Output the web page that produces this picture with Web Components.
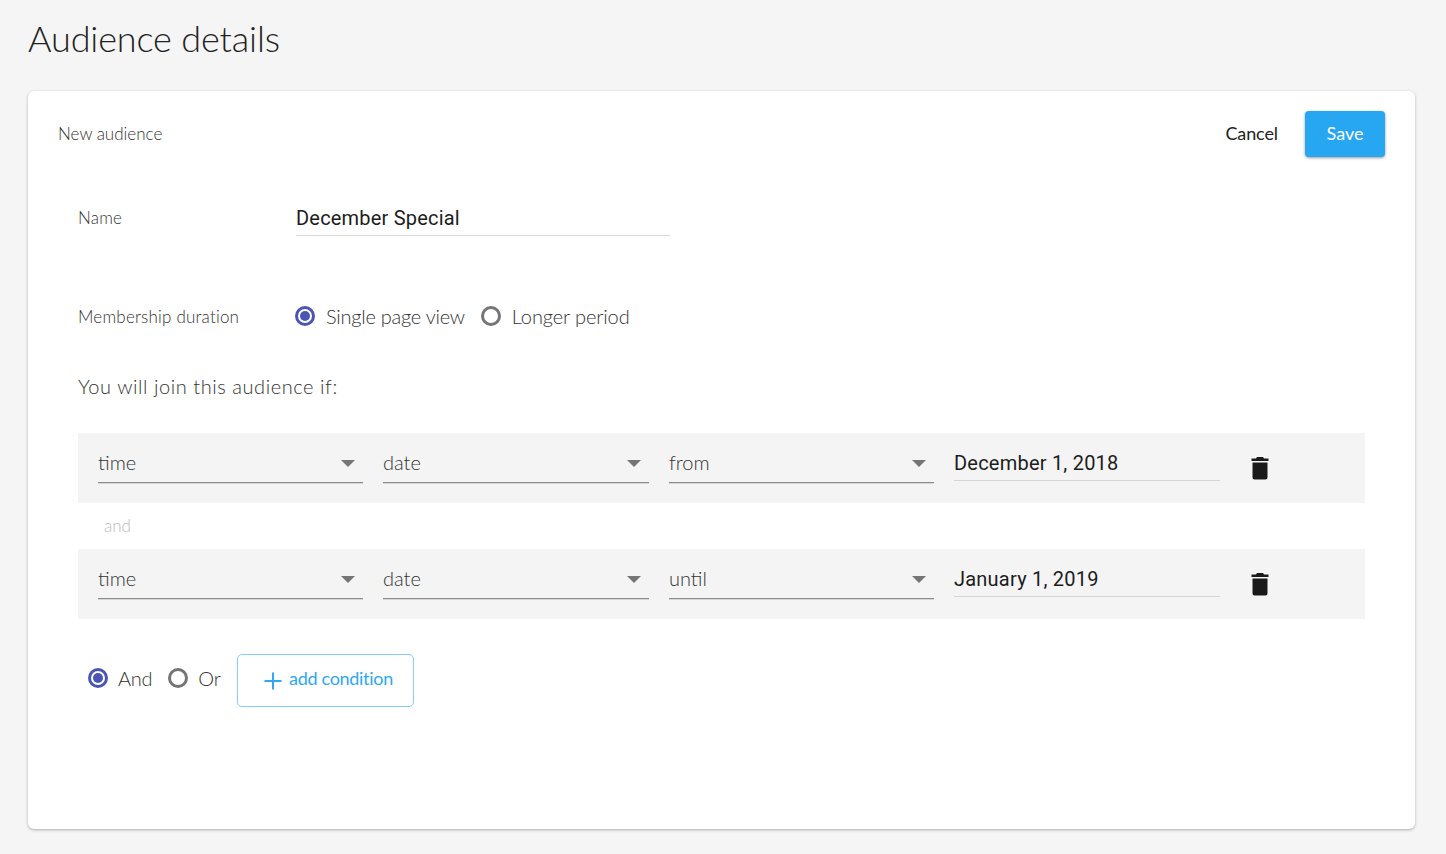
<!DOCTYPE html>
<html>
<head>
<meta charset="utf-8">
<title>Audience details</title>
<style>
  html, body { margin: 0; padding: 0; }
  body {
    background: #f5f5f5;
    font-family: "Lato", "Liberation Sans", sans-serif;
    color: #222;
    height: 854px;
    overflow: hidden;
  }
</style>
</head>
<body>
<audience-page></audience-page>

<script>
class AudiencePage extends HTMLElement {
  constructor() {
    super();
    this.attachShadow({ mode: 'open' });
  }

  connectedCallback() {
    this.shadowRoot.innerHTML = `
      <style>
        :host { display: block; padding: 0 31px 0 28px; }
        h1 {
          margin: 0;
          height: 91px;
          box-sizing: border-box;
          padding-top: 16px;
          font-size: 36px;
          line-height: 44px;
          font-weight: 300;
          letter-spacing: -0.13px;
          color: #222;
        }
        .card {
          height: 738px;
          box-sizing: border-box;
          background: #fff;
          border-radius: 6px;
          box-shadow: 0 1px 3px rgba(0, 0, 0, 0.3);
        }
        header {
          display: flex;
          align-items: center;
          height: 46px;
          padding: 20px 30px 0;
        }
        .crumb { flex: 1; font-size: 17px; font-weight: 300; color: #333; margin-top: -2px; }
        .cancel { font-size: 18px; letter-spacing: -0.1px; margin-right: 27px; margin-top: -2px; color: #222; }
        .save {
          width: 80px;
          height: 46px;
          padding-bottom: 2px;
          box-sizing: border-box;
          display: flex;
          align-items: center;
          justify-content: center;
          font-size: 18px;
          color: #fff;
          background: #27a6f2;
          border-radius: 4px;
          box-shadow: 0 1px 3px rgba(0, 0, 0, 0.4);
        }
        .body { padding: 0 50px; }
        .field { display: flex; align-items: center; }
        .label { width: 218px; font-size: 17px; font-weight: 300; letter-spacing: 0.2px; color: #333; }
        .name-row { height: 38px; margin-top: 41px; }
        .name {
          width: 374px;
          height: 38px;
          box-sizing: border-box;
          border-bottom: 1px solid #d8d8d8;
          font-family: "Roboto", "Liberation Sans", sans-serif;
          font-size: 20px;
          line-height: 40px;
          letter-spacing: 0.2px;
          color: #1c1c1c;
        }
        .duration { height: 28px; margin-top: 66px; --radio-gap: 11px; }
        .intro {
          margin-top: 44px;
          height: 24px;
          font-size: 20px;
          line-height: 24px;
          font-weight: 300;
          letter-spacing: 0.56px;
          color: #333;
        }
        .rules { margin-top: 35px; }
        .and { height: 46px; line-height: 46px; padding-left: 26px; font-size: 17px; color: #bbb; font-weight: 300; }
        .footer { display: flex; align-items: center; margin-top: 35px; padding-left: 11px; }
        .footer radio-option { margin-top: -5px; }
        .footer radio-option + radio-option { margin-left: 17px; }
        .add {
          box-sizing: border-box;
          width: 177px;
          height: 53px;
          margin-left: 17px;
          padding-left: 4px;
          display: flex;
          align-items: center;
          justify-content: center;
          gap: 6px;
          border: 1px solid #86cdf8;
          border-radius: 5px;
          font-size: 18px;
          letter-spacing: -0.3px;
          color: #2ea8f2;
        }
        .add svg { display: block; }
        .add span { margin-top: -5px; }
      </style>
      <h1>Audience details</h1>
      <section class="card">
        <header>
          <span class="crumb">New audience</span>
          <span class="cancel">Cancel</span>
          <span class="save">Save</span>
        </header>
        <div class="body">
          <div class="field name-row">
            <span class="label">Name</span>
            <div class="name">December Special</div>
          </div>
          <div class="field duration">
            <span class="label">Membership duration</span>
            <radio-option checked>Single page view</radio-option>
            <radio-option style="margin-left:17px;letter-spacing:-0.1px">Longer period</radio-option>
          </div>
          <div class="intro">You will join this audience if:</div>
          <div class="rules">
            <condition-row subject="time" kind="date" op="from" value="December 1, 2018"></condition-row>
            <div class="and">and</div>
            <condition-row subject="time" kind="date" op="until" value="January 1, 2019"></condition-row>
          </div>
          <div class="footer">
            <radio-option checked>And</radio-option>
            <radio-option>Or</radio-option>
            <div class="add">
              <svg width="20" height="20" viewBox="0 0 20 20"><path d="M10 1.500v17M1.500 10h17" stroke="#2ea8f2" stroke-width="2" fill="none"/></svg>
              <span>add condition</span>
            </div>
          </div>
        </div>
      </section>
    `;
  }
}

class RadioOption extends HTMLElement {
  constructor() {
    super();
    this.attachShadow({ mode: 'open' });
  }

  connectedCallback() {
    const checked = this.hasAttribute('checked');
    this.shadowRoot.innerHTML = `
      <style>
        :host {
          display: inline-flex;
          align-items: center;
          font-size: 20px;
          font-weight: 300;
          letter-spacing: -0.25px;
          color: #333;
        }
        svg { display: block; margin-right: var(--radio-gap, 10px); margin-left: -1px; margin-top: -1px; }
      </style>
      <svg width="20" height="20" viewBox="0 0 20 20">
        <circle cx="10" cy="10" r="8.500" fill="none" stroke="${checked ? '#4a55b5' : '#757575'}" stroke-width="3"/>
        ${checked ? '<circle cx="10" cy="10" r="5" fill="#4a55b5"/>' : ''}
      </svg>
      <slot></slot>
    `;
  }
}

class SelectField extends HTMLElement {
  constructor() {
    super();
    this.attachShadow({ mode: 'open' });
  }

  connectedCallback() {
    this.shadowRoot.innerHTML = `
      <style>
        :host {
          display: flex;
          align-items: center;
          justify-content: space-between;
          box-sizing: border-box;
          height: 39px;
          padding: 0 8px 2px 0;
          border-bottom: 1px solid #8b8b8b;
          box-shadow: 0 1px 0 #d6d6d6;
          font-size: 20px;
          font-weight: 300;
          color: #333;
        }
        i { width: 0; height: 0; margin-top: 2px; border: 7px solid transparent; border-top-color: #757575; border-bottom: 0; }
      </style>
      <slot></slot><i></i>
    `;
  }
}

class ConditionRow extends HTMLElement {
  constructor() {
    super();
    this.attachShadow({ mode: 'open' });
  }

  connectedCallback() {
    const subject = this.getAttribute('subject');
    const kind = this.getAttribute('kind');
    const op = this.getAttribute('op');
    const value = this.getAttribute('value');
    this.shadowRoot.innerHTML = `
      <style>
        :host {
          display: grid;
          grid-template-columns: 265px 266px 265px 266px 1fr;
          column-gap: 20px;
          height: 70px;
          box-sizing: border-box;
          padding: 11px 20px 0;
          background: #f4f4f4;
        }
        .value {
          box-sizing: border-box;
          height: 37px;
          line-height: 38px;
          border-bottom: 1px solid #d4d4d4;
          font-family: "Roboto", "Liberation Sans", sans-serif;
          font-size: 20px;
          letter-spacing: 0.22px;
          color: #1c1c1c;
        }
        svg { display: block; margin: 12px 0 0 10px; }
      </style>
      <select-field>${subject}</select-field>
      <select-field>${kind}</select-field>
      <select-field>${op}</select-field>
      <div class="value">${value}</div>
      <svg width="20" height="24" viewBox="0 0 20 24">
        <path fill="#1a1a1a" d="M7 1h6l1 1.500h4.500v2.500h-17v-2.500h4.500zM2.500 6.500h15v15a2 2 0 0 1-2 2h-11a2 2 0 0 1-2-2z"/>
      </svg>
    `;
  }
}

customElements.define('radio-option', RadioOption);
customElements.define('select-field', SelectField);
customElements.define('condition-row', ConditionRow);
customElements.define('audience-page', AudiencePage);
</script>
</body>
</html>
